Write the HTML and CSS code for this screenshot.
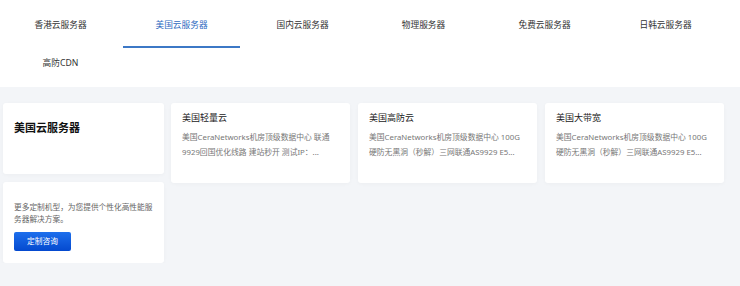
FILE: index.html
```
<!DOCTYPE html>
<html lang="zh-CN">
<head>
    <meta charset="UTF-8">
    <meta name="viewport" content="width=device-width, initial-scale=1.0">
    <title>美国云服务器</title>
    <link rel="stylesheet" href="styles.css">
</head>
<body>
    <div class="tabs">
        <a href="#" class="tab">香港云服务器</a>
        <a href="#" class="tab active">美国云服务器</a>
        <a href="#" class="tab">国内云服务器</a>
        <a href="#" class="tab">物理服务器</a>
        <a href="#" class="tab">免费云服务器</a>
        <a href="#" class="tab">日韩云服务器</a>
        <a href="#" class="tab">高防CDN</a>
    </div>

    <div class="panel">
        <div class="side">
            <div class="side-card">
                <h2 class="side-title">美国云服务器</h2>
            </div>
            <div class="side-card side-more">
                <p class="side-text">更多定制机型，为您提供个性化高性能服务器解决方案。</p>
                <a href="#" class="btn">定制咨询</a>
            </div>
        </div>

        <div class="products">
            <div class="product">
                <h3 class="product-title">美国轻量云</h3>
                <p class="product-desc">美国CeraNetworks机房顶级数据中心 联通9929回国优化线路 建站秒开 测试IP：...</p>
            </div>
            <div class="product">
                <h3 class="product-title">美国高防云</h3>
                <p class="product-desc">美国CeraNetworks机房顶级数据中心 100G硬防无黑洞（秒解）三网联通AS9929 E5...</p>
            </div>
            <div class="product">
                <h3 class="product-title">美国大带宽</h3>
                <p class="product-desc">美国CeraNetworks机房顶级数据中心 100G硬防无黑洞（秒解）三网联通AS9929 E5...</p>
            </div>
        </div>
    </div>
</body>
</html>
```

FILE: styles.css
```
body {
    font-family: "Noto Sans", "Noto Sans CJK SC", sans-serif;
    margin: 0;
    padding: 0;
    background-color: #f3f5f8;
    color: #333;
}
.tabs {
    display: grid;
    grid-template-columns: repeat(6, 121px);
    row-gap: 2px;
    background-color: #fff;
    padding: 12px 0 1px;
}
.tab {
    display: block;
    margin: 0 2px;
    height: 26px;
    line-height: 26px;
    padding-bottom: 8px;
    border-bottom: 2px solid transparent;
    text-align: center;
    font-size: 8.7px;
    color: #333;
    text-decoration: none;
}
.tab.active {
    color: #2f6bbf;
    border-bottom-color: #3c78c6;
}
.panel {
    display: flex;
    gap: 7px;
    padding: 16px 0 0 3px;
}
.side {
    width: 161px;
    display: flex;
    flex-direction: column;
    gap: 8px;
}
.side-card {
    background-color: #fff;
    border-radius: 3px;
    box-shadow: 0 1px 4px rgba(0, 0, 0, 0.03);
    padding: 19px 11px 0;
    height: 52px;
}
.side-title {
    margin: 0;
    font-size: 11px;
    line-height: 12px;
    font-weight: bold;
    color: #111;
}
.side-more {
    height: auto;
    padding-bottom: 12px;
}
.side-text {
    margin: 0;
    font-size: 7.7px;
    line-height: 12px;
    color: #666;
}
.btn {
    display: inline-block;
    margin-top: 7px;
    width: 57px;
    height: 19px;
    line-height: 19px;
    text-align: center;
    font-size: 7.7px;
    color: #fff;
    text-decoration: none;
    border-radius: 2px;
    background: linear-gradient(#1d6fec, #0449cf);
}
.products {
    display: grid;
    grid-template-columns: repeat(3, 179px);
    gap: 8px;
    align-items: start;
}
.product {
    background-color: #fff;
    border-radius: 3px;
    box-shadow: 0 1px 4px rgba(0, 0, 0, 0.03);
    padding: 8px 11px 0;
    height: 72px;
}
.product-title {
    margin: 0;
    font-size: 9px;
    line-height: 13px;
    font-weight: normal;
    color: #222;
}
.product-desc {
    margin: 6px 0 0;
    font-size: 7.8px;
    line-height: 15px;
    color: #777;
}
```
